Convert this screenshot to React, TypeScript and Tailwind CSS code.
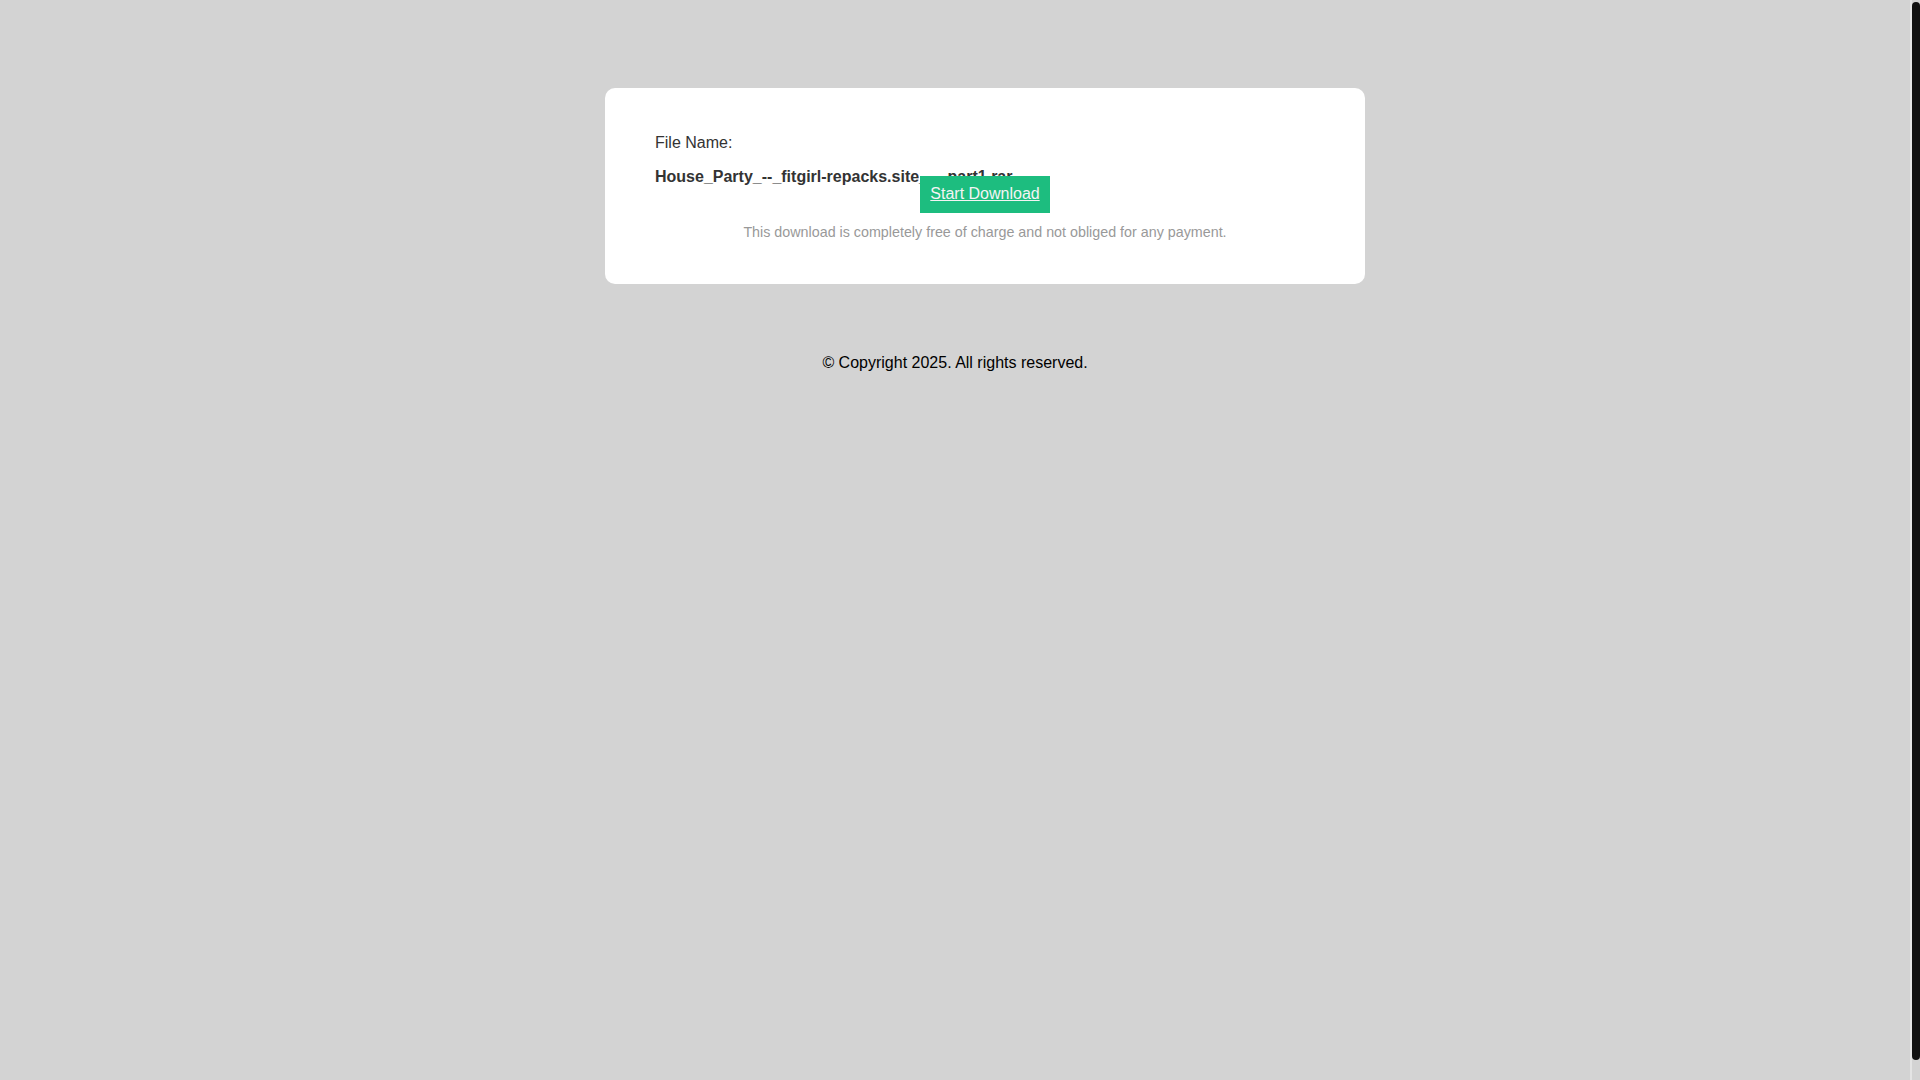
import React from 'react'

const fileName = 'House_Party_--_fitgirl-repacks.site_--_part1.rar'

export default function App() {
  return (
    <div className="flex h-screen w-full overflow-hidden bg-[#d3d3d3] font-['Liberation_Sans',Arial,sans-serif]">
      <main className="flex flex-1 flex-col items-center pt-[88px]">
        {/* Download card */}
        <div className="ml-[60px] w-[760px] rounded-[10px] bg-white px-[50px] pb-[44px] pt-[46px]">
          <p className="text-[16px] leading-[18px] text-[#333]">File Name:</p>
          <p className="mt-[16px] text-[16px] font-bold leading-[18px] text-[#333]">{fileName}</p>
          <div className="-mt-[10px] flex justify-center">
            <a
              href="#"
              className="relative bg-[#1dbd7f] px-[10px] pb-[10px] pt-[9px] text-[16px] leading-[18px] text-[#f4f4f4] underline"
            >
              Start Download
            </a>
          </div>
          <p className="mt-[11px] text-center text-[14.3px] leading-[16px] text-[#999]">
            This download is completely free of charge and not obliged for any payment.
          </p>
        </div>

        <p className="mt-[70px] text-[16px] leading-[18px] text-black">© Copyright 2025. All rights reserved.</p>
      </main>

      {/* scrollbar */}
      <div className="w-[10px] border-l-2 border-[#e4e4e4] bg-[#d3d3d3]">
        <div className="mt-[2px] h-[1058px] w-[8px] rounded-[4px] bg-[#111]" />
      </div>
    </div>
  )
}
